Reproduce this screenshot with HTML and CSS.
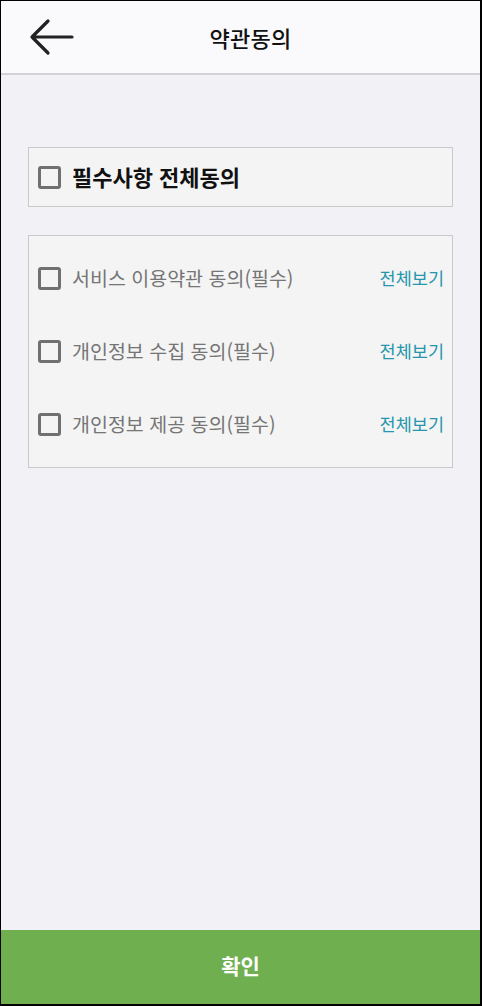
FILE: index.html
```html
<!DOCTYPE html>
<html lang="ko">
<head>
<meta charset="utf-8">
<link rel="stylesheet" href="styles.css">
</head>
<body>
<div class="screen">
  <header class="topbar">
    <button class="back" aria-label="뒤로">
      <svg width="46" height="40" viewBox="0 0 46 40"><path d="M44 20H4M20 4L4 20l16 16" fill="none" stroke="#222" stroke-width="3.2" stroke-linecap="round" stroke-linejoin="round"/></svg>
    </button>
    <h1 class="title">약관동의</h1>
  </header>
  <main class="content">
    <div class="card all">
      <span class="check"></span>
      <span class="all-label">필수사항 전체동의</span>
    </div>
    <div class="card list">
      <div class="row"><span class="check"></span><span class="label">서비스 이용약관 동의(필수)</span><a class="more">전체보기</a></div>
      <div class="row"><span class="check"></span><span class="label">개인정보 수집 동의(필수)</span><a class="more">전체보기</a></div>
      <div class="row"><span class="check"></span><span class="label">개인정보 제공 동의(필수)</span><a class="more">전체보기</a></div>
    </div>
  </main>
  <button class="confirm">확인</button>
</div>
</body>
</html>
```
FILE: styles.css
```css
* { box-sizing: border-box; }
html, body { margin: 0; padding: 0; }
body {
  width: 482px;
  height: 1006px;
  font-family: "Noto Sans CJK KR", "Noto Sans", sans-serif;
}
.screen {
  width: 482px;
  height: 1006px;
  border-style: solid;
  border-color: #000;
  border-width: 1px 2px 2px 1px;
  display: flex;
  flex-direction: column;
  background: #f2f1f6;
}
.topbar {
  height: 74px;
  flex: none;
  background: #fafafc;
  border-bottom: 2px solid #d3d3d6;
  display: flex;
  align-items: center;
  justify-content: center;
  padding-left: 20px;
  position: relative;
}
.back {
  position: absolute;
  left: 27px;
  top: 16px;
  border: 0;
  background: none;
  padding: 0;
  width: 46px;
  height: 40px;
}
.back svg { display: block; }
.title {
  margin: 0;
  font-size: 22px;
  font-weight: 500;
  color: #111;
  letter-spacing: 0.3px;
  margin-top: -1px;
}
.content {
  flex: 1;
  padding: 72px 27px 0 27px;
}
.card {
  background: #f4f4f4;
  border: 1px solid #c9c9c9;
}
.all {
  height: 60px;
  display: flex;
  align-items: center;
  padding-left: 9px;
}
.check {
  width: 23px;
  height: 23px;
  border: 3px solid #707070;
  border-radius: 3px;
  flex: none;
}
.all-label {
  margin-left: 11px;
  font-size: 22px;
  font-weight: 700;
  color: #111;
  margin-top: -2px;
}
.list {
  margin-top: 28px;
  padding: 6px 8px 6px 9px;
}
.row {
  height: 73px;
  display: flex;
  align-items: center;
}
.label {
  margin-left: 11px;
  font-size: 19.5px;
  color: #757575;
  flex: 1;
  margin-top: -2px;
}
.more {
  font-size: 17.5px;
  color: #2496ad;
  margin-top: -2px;
}
.confirm {
  height: 74px;
  flex: none;
  border: 0;
  background: #6faf4f;
  color: #fff;
  font-family: inherit;
  font-size: 21px;
  font-weight: 700;
  padding: 0 0 4px 0;
}
```
